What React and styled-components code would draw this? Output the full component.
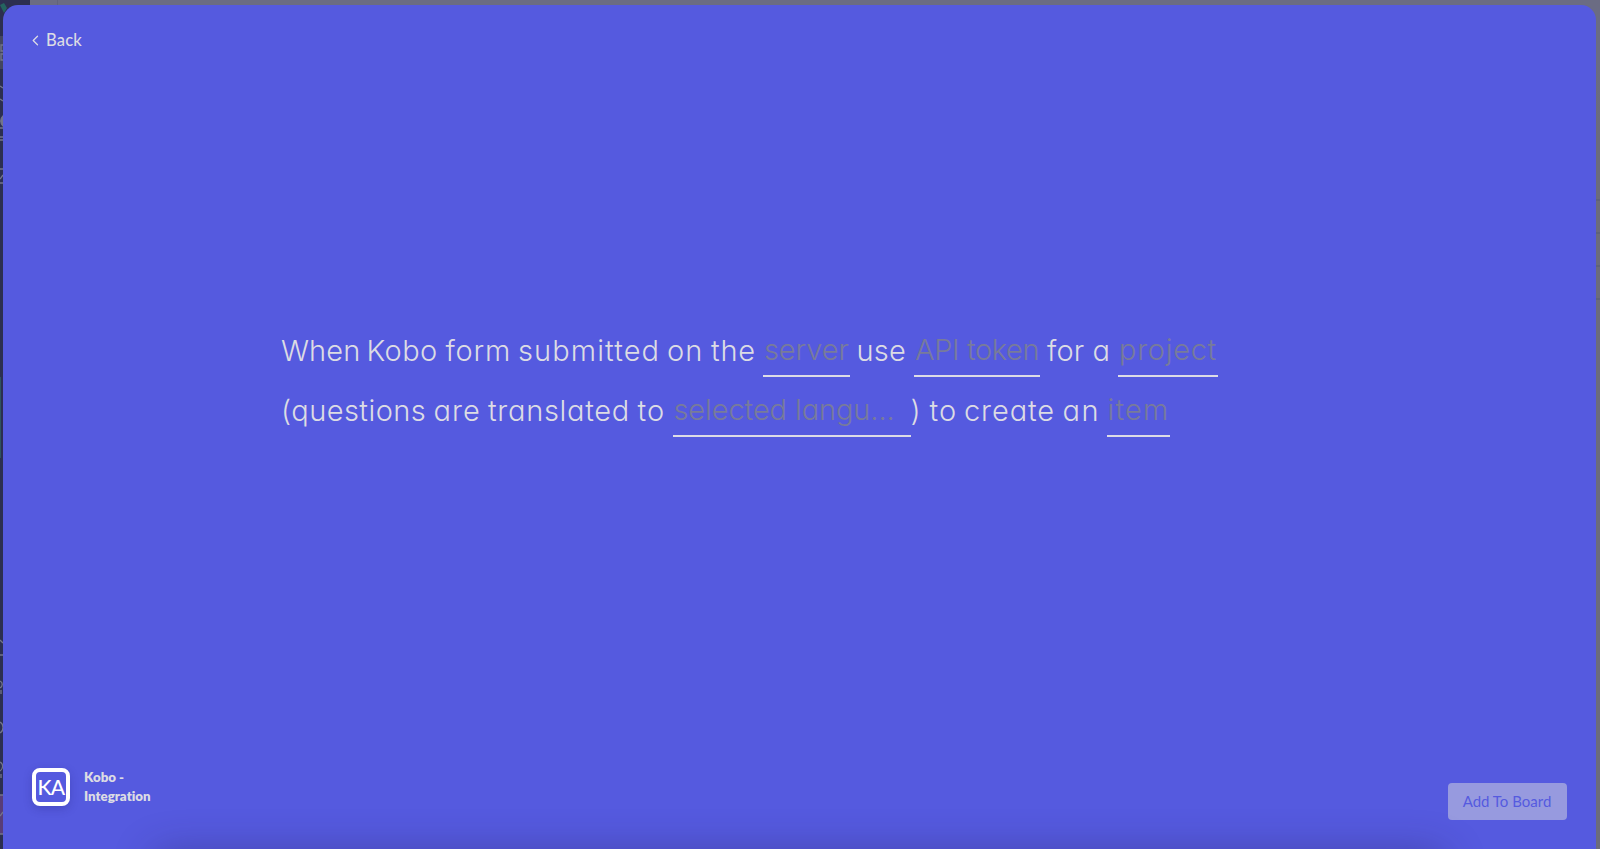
import React from 'react';
import styled, { createGlobalStyle } from 'styled-components';

const GlobalStyle = createGlobalStyle`
  * { box-sizing: border-box; }
  body { margin: 0; overflow: hidden; background: #6b6c80; }
`;

const Screen = styled.div`
  position: relative;
  display: flex;
  height: 849px;
  overflow: hidden;
  background: linear-gradient(#6b6c83 0 60px, #6c6b7b 140px);
`;

const Sidebar = styled.aside`
  width: 30px;
  background: #2c2f50;
  svg { display: block; }
`;

const BoardHeader = styled.div`
  width: 28px;
  height: 6px;
  border-right: 1px solid #62637a;
`;

const GridEdge = styled.div`
  margin-left: auto;
  width: 4px;
  padding-top: 199px;
  div { height: 33px; border-top: 2px solid #606377; }
`;

const Modal = styled.main`
  position: absolute;
  inset: 5px 4px 0 3px;
  display: flex;
  flex-direction: column;
  justify-content: space-between;
  overflow: hidden;
  border-radius: 15px 15px 0 0;
  background: #555adf;
  color: #dcdce4;
  font-family: Lato, sans-serif;
  font-variant-ligatures: none;
`;

const BackButton = styled.button`
  display: flex;
  align-items: center;
  align-self: flex-start;
  gap: 7px;
  margin: 23px 0 0 29px;
  padding: 0;
  border: 0;
  background: none;
  color: inherit;
  font: 500 16.5px/25px Lato, sans-serif;
  letter-spacing: 0.15px;
`;

const Recipe = styled.section`
  padding: 0 0 0 278px;
  margin-bottom: 60px;
  font: 350 29px/60px Inter, sans-serif;
  font-feature-settings: "cv11";
`;

const Line = styled.div`
  display: flex;
  height: 59.5px;
  white-space: pre;
`;

const Word = styled.span`
  flex: none;
  width: ${(p) => p.$slot}px;
  letter-spacing: ${(p) => p.$track}px;
`;

const Field = styled.span`
  flex: none;
  width: ${(p) => p.$slot}px;
  height: 56px;
  margin-right: ${(p) => p.$gap || 0}px;
  padding-left: 1px;
  border-bottom: 2px solid #dcdce6;
  color: #787b9b;
  font-weight: 300;
  line-height: 58px;
  letter-spacing: ${(p) => p.$track}px;
`;

const Footer = styled.footer`
  display: flex;
  justify-content: space-between;
  padding: 0 29.5px 29px 29px;
`;

const AppInfo = styled.div`
  display: flex;
  align-items: flex-start;
  gap: 14px;
`;

const AppLogo = styled.div`
  width: 38px;
  height: 38px;
  border: 4px solid #fff;
  border-radius: 8px;
  box-shadow: 0 3px 8px rgba(30, 30, 120, 0.25);
  color: #fff;
  text-align: center;
  font: 500 21px/29px Lato, sans-serif;
  letter-spacing: -0.6px;
`;

const AppName = styled.div`
  font-size: 13.3px;
  font-weight: 800;
  line-height: 18.7px;
`;

const AddButton = styled.button`
  width: 119px;
  height: 37px;
  margin-top: 15px;
  padding: 0;
  border: 0;
  border-radius: 4px;
  background: #979adf;
  color: #555adf;
  font: 400 15px/37px Lato, sans-serif;
`;

const BottomShadow = styled.div`
  position: absolute;
  left: 150px;
  right: 150px;
  bottom: -30px;
  height: 30px;
  border-radius: 20px;
  box-shadow: 0 5px 40px rgba(40, 35, 90, 0.45);
`;

const SidebarIcons = () => (
  <svg width="30" height="849" fill="none" stroke="#73758a" strokeWidth="1.3">
    <path d="M0 36H30V69H0Z" fill="#43465f" stroke="none" />
    <path d="M0 5L4 3L7 8L4 13Z" fill="#24645f" stroke="none" />
    <path d="M3 45H1V51H3M3 54H1V60H3M0 86L3 88M0 99L3 101M0 128H3M0 137H3M0 140H3M0 169H3M0 179L3 175M0 183H3" />
    <path d="M3 116C0 119 0 123 3 126Z" fill="#73758a" />
    <path d="M0 377H1V458H0Z" fill="#2e5360" stroke="none" />
    <path d="M0 640L3 643M0 655H3M0 681C3 682 3 686 0 688M1 690V694M0 722C4 724 4 731 0 733M0 762C4 764 3 769 0 771M1 774V778" />
    <path d="M0 795H4V834H0Z" fill="#583d78" stroke="none" />
    <path d="M0 795H3M0 816L3 812M0 834H3" />
  </svg>
);

export default function App() {
  return (
    <Screen>
      <GlobalStyle />
      <Sidebar><SidebarIcons /></Sidebar>
      <BoardHeader />
      <GridEdge><div /><div /><div /><div /></GridEdge>
      <Modal>
        <BackButton>
          <svg width="7" height="11" viewBox="0 0 7 11" fill="none" stroke="currentColor" strokeWidth="1.3" strokeLinecap="round" strokeLinejoin="round">
            <path d="M5.5 1.2L1.2 5.5L5.5 9.8" />
          </svg>
          Back
        </BackButton>
        <Recipe>
          <Line>
            <Word $slot={85.5} $track={0.1}>When</Word>
            <Word $slot={79} $track={0.45}>Kobo</Word>
            <Word $slot={72.5} $track={0.8}>form</Word>
            <Word $slot={149} $track={1.1}>submitted</Word>
            <Word $slot={44} $track={1.1}>on</Word>
            <Word $slot={52} $track={0.8}>the</Word>
            <Field $slot={86.5} $gap={7} $track={-0.1}>server</Field>
            <Word $slot={57.5} $track={0.2}>use</Word>
            <Field $slot={126} $gap={7} $track={-0.4}>API token</Field>
            <Word $slot={45.5} $track={0.1}>for</Word>
            <Word $slot={25.5} $track={0}>a</Word>
            <Field $slot={100} $track={0.7}>project</Field>
          </Line>
          <Line>
            <Word $slot={152.5} $track={0.45}>(questions</Word>
            <Word $slot={54.5} $track={1}>are</Word>
            <Word $slot={149.5} $track={0.7}>translated</Word>
            <Word $slot={35} $track={1.1}>to</Word>
            <Field $slot={238} $track={-0.1}>selected langu...</Field>
            <Word $slot={19} $track={0}>)</Word>
            <Word $slot={34.5} $track={1.1}>to</Word>
            <Word $slot={98.5} $track={0.9}>create</Word>
            <Word $slot={44} $track={1.5}>an</Word>
            <Field $slot={63} $track={1.2}>item</Field>
          </Line>
        </Recipe>
        <Footer>
          <AppInfo>
            <AppLogo>KA</AppLogo>
            <AppName>Kobo -<br />Integration</AppName>
          </AppInfo>
          <AddButton>Add To Board</AddButton>
        </Footer>
        <BottomShadow />
      </Modal>
    </Screen>
  );
}
